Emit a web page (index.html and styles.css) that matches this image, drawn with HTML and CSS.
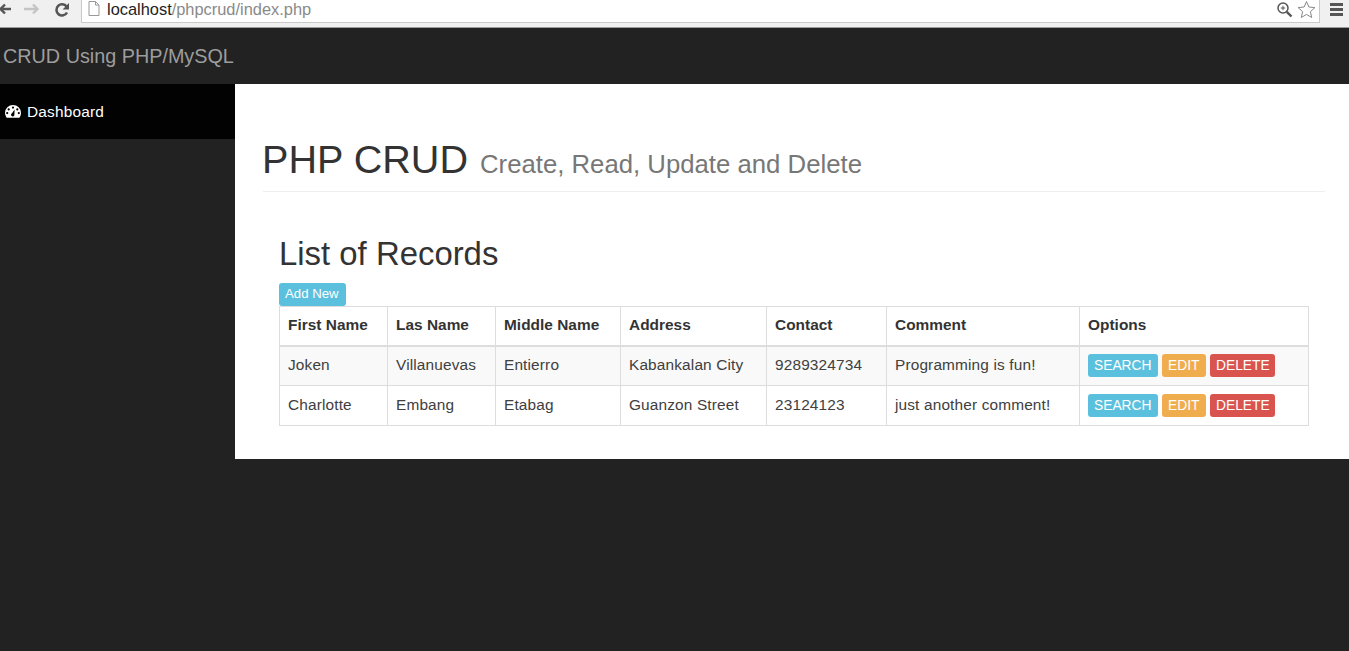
FILE: index.html
```html
<!DOCTYPE html>
<html lang="en">
<head>
<meta charset="utf-8">
<title>PHP CRUD</title>
<link rel="stylesheet" href="styles.css">
</head>
<body>
<header class="browser">
  <svg class="nav-icon back" width="14" height="14" viewBox="0 0 14 14"><path d="M13 7H3M7 2.5 2.5 7 7 11.5" fill="none" stroke="#555" stroke-width="2.4"/></svg>
  <svg class="nav-icon fwd" width="18" height="14" viewBox="0 0 18 14"><path d="M1 7h14M10 2.5 14.5 7 10 11.5" fill="none" stroke="#c4c4c4" stroke-width="2.4"/></svg>
  <svg class="nav-icon reload" width="16" height="16" viewBox="0 0 16 16"><path d="M13 10.500A5.600 5.600 0 1 1 12.600 4.600" fill="none" stroke="#555" stroke-width="2.600"/><path d="M15 1v6.400H8.600z" fill="#555"/></svg>
  <div class="omnibox">
    <svg class="page-icon" width="12" height="15" viewBox="0 0 12 15"><path d="M1 .5h6.500L11 4v10.500H1zM7.500.5V4H11" fill="#fff" stroke="#999"/></svg>
    <span class="url"><span class="host">localhost</span>/phpcrud/index.php</span>
    <svg class="zoom-icon" width="17" height="17" viewBox="0 0 17 17"><circle cx="7" cy="7" r="5" fill="none" stroke="#555" stroke-width="1.500"/><path d="M10.800 10.800 15.500 15.500" stroke="#555" stroke-width="2.400"/><path d="M4.800 7h4.400M7 4.800v4.400" stroke="#555"/></svg>
    <svg class="star-icon" width="19" height="19" viewBox="0 0 19 19"><path d="M9.500 1.500 11.900 7l6 .6-4.500 4 1.300 5.900-5.200-3.100-5.200 3.100 1.300-5.900-4.500-4 6-.6z" fill="#fff" stroke="#888"/></svg>
  </div>
  <div class="menu-icon"><i></i><i></i><i></i></div>
</header>

<nav class="navbar"><a class="brand" href="#">CRUD Using PHP/MySQL</a></nav>

<div class="layout">
  <aside class="sidebar">
    <a class="side-link" href="#">
      <svg class="gauge" width="16" height="13" viewBox="0 0 16 13"><path fill-rule="evenodd" fill="#fff" d="M8 0a8 8 0 0 1 8 8c0 1.800-.6 3.500-1.600 4.700H1.600A7.900 7.900 0 0 1 0 8a8 8 0 0 1 8-8zM8 1.500a1.100 1.100 0 1 0 0 2.200 1.100 1.100 0 0 0 0-2.200zM3.700 3.300a1.100 1.100 0 1 0 0 2.200 1.100 1.100 0 0 0 0-2.200zM12.300 3.300a1.100 1.100 0 1 0 0 2.200 1.100 1.100 0 0 0 0-2.200zM2.200 7a1.100 1.100 0 1 0 0 2.200 1.100 1.100 0 0 0 0-2.200zM13.800 7a1.100 1.100 0 1 0 0 2.200 1.100 1.100 0 0 0 0-2.200zM9.600 4.500 7 8.200a1.700 1.700 0 1 0 2.400 1.300z"/></svg>
      Dashboard
    </a>
  </aside>
  <main class="content">
    <div class="page-header">
      <h1>PHP CRUD <small>Create, Read, Update and Delete</small></h1>
    </div>
    <section class="records">
      <h2>List of Records</h2>
      <a class="btn info add" href="#">Add New</a>
      <table>
        <colgroup>
          <col class="c1"><col class="c2"><col class="c3"><col class="c4"><col class="c5"><col class="c6"><col class="c7">
        </colgroup>
        <thead>
          <tr><th>First Name</th><th>Las Name</th><th>Middle Name</th><th>Address</th><th>Contact</th><th>Comment</th><th>Options</th></tr>
        </thead>
        <tbody>
          <tr class="odd">
            <td>Joken</td><td>Villanuevas</td><td>Entierro</td><td>Kabankalan City</td><td>9289324734</td><td>Programming is fun!</td>
            <td class="options"><a class="btn info" href="#">SEARCH</a><a class="btn warning" href="#">EDIT</a><a class="btn danger" href="#">DELETE</a></td>
          </tr>
          <tr>
            <td>Charlotte</td><td>Embang</td><td>Etabag</td><td>Guanzon Street</td><td>23124123</td><td>just another comment!</td>
            <td class="options"><a class="btn info" href="#">SEARCH</a><a class="btn warning" href="#">EDIT</a><a class="btn danger" href="#">DELETE</a></td>
          </tr>
        </tbody>
      </table>
    </section>
  </main>
</div>
</body>
</html>
```
FILE: styles.css
```css
* { box-sizing: border-box; }
html, body { margin: 0; height: 100%; }
body {
  background: #222;
  font-family: "Liberation Sans", Arial, sans-serif;
  color: #333;
  overflow: hidden;
  min-height: 651px;
}
a { text-decoration: none; }

.browser {
  height: 28px;
  background: #f0f0f0;
  display: flex;
  align-items: flex-start;
  border-bottom: 1px solid #9a9a9a;
}
.nav-icon { flex: none; margin-top: 2px; }
.back { margin-left: -2px; }
.fwd { margin-left: 11px; }
.reload { margin-left: 13px; }
.omnibox {
  flex: 1;
  margin-left: 11px;
  height: 23px;
  background: #fff;
  border: 1px solid #c9c9c9;
  border-top: 0;
  display: flex;
  align-items: flex-start;
  padding: 0 3px 0 6px;
}
.page-icon { margin-top: 1px; }
.url { margin-left: 7px; font-size: 16.400px; line-height: 19px; color: #8a8a8a; flex: 1; }
.host { color: #222; }
.zoom-icon { margin-top: 1px; margin-right: -1px; }
.star-icon { margin-left: 5px; }
.menu-icon { width: 13px; margin: 3px 6px 0 10px; display: flex; flex-direction: column; gap: 2px; }
.menu-icon i { height: 3px; background: #555; }

.navbar { height: 56px; display: flex; align-items: center; background: #222; }
.brand { color: #9d9d9d; font-size: 19.800px; padding-left: 3px; }

.layout { display: flex; align-items: flex-start; }
.sidebar { width: 235px; flex: none; }
.side-link {
  height: 55px;
  background: #020202;
  color: #fff;
  font-size: 15.400px;
  letter-spacing: .2px;
  display: flex;
  align-items: center;
  gap: 6px;
  padding-left: 5px;
}
.content {
  flex: 1;
  background: #fff;
  height: 375px;
  padding: 0 24px 0 28px;
}
.page-header {
  margin-top: 50px;
  height: 58px;
  border-bottom: 1px solid #eee;
}
h1 {
  margin: 0 0 0 -1px;
  font-size: 39.600px;
  font-weight: 400;
  line-height: 50px;
  color: #333;
}
small { font-size: 25.740px; color: #777; margin-left: 1px; }
.records { padding-left: 16px; margin-top: 40px; }
h2 {
  margin: 0;
  font-size: 32.900px;
  font-weight: 400;
  line-height: 44px;
  color: #333;
  height: 51px;
}
.btn {
  display: inline-block;
  color: #fff;
  font-size: 13.200px;
  line-height: 20px;
  padding: 1px 6px;
  border-radius: 3px;
  border: 0;
}
.info { background: #5bc0de; }
.warning { background: #f0ad4e; }
.danger { background: #d9534f; }
.add { display: block; width: 67px; height: 23px; white-space: nowrap; }

table {
  border-collapse: collapse;
  table-layout: fixed;
  width: 1029px;
  font-size: 15.400px;
  color: #404040;
}
.c1, .c2 { width: 108px; }
.c3 { width: 125px; }
.c4 { width: 146px; }
.c5 { width: 120px; }
.c6 { width: 193px; }
.c7 { width: 229px; }
th, td {
  border: 1px solid #ddd;
  padding: 0 8px 1px;
  text-align: left;
  white-space: nowrap;
}
th { height: 39px; font-weight: 700; border-bottom-width: 2px; color: #333; letter-spacing: .03px; }
td { height: 40px; letter-spacing: .15px; }
.odd td { background: #f9f9f9; }
.options { font-size: 0; padding-bottom: 0; }
.options .btn { margin-right: 4px; font-size: 13.800px; height: 23px; vertical-align: middle; padding: 2px 6px 0; letter-spacing: 0; }
.options .danger { width: 65px; white-space: nowrap; }
.options .info { width: 70px; }
.options .warning { width: 44px; }
```
